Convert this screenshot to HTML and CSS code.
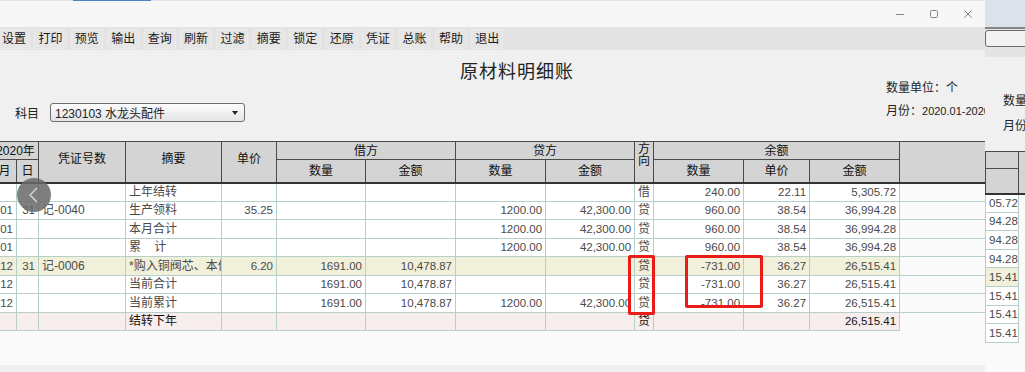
FILE: index.html
```html
<!DOCTYPE html>
<html lang="zh-CN">
<head>
    <meta charset="UTF-8">
    <title>原材料明细账</title>
    <link rel="stylesheet" href="styles.css">
</head>
<body>

    <div class="win">
        <!-- 标题栏 -->
        <div class="titlebar">
            <div class="tab-line"><span></span></div>
            <div class="controls">
                <svg viewBox="0 0 10 10"><path d="M1 5.5 H9"/></svg>
                <svg viewBox="0 0 10 10"><rect x="1.5" y="1.5" width="7" height="7" rx="1"/></svg>
                <svg viewBox="0 0 10 10"><path d="M1.5 1.5 L8.5 8.5 M8.5 1.5 L1.5 8.5"/></svg>
            </div>
        </div>

        <!-- 工具栏 -->
        <div class="toolbar">
            <span class="tool">设置</span>
            <span class="tool">打印</span>
            <span class="tool">预览</span>
            <span class="tool">输出</span>
            <span class="tool">查询</span>
            <span class="tool">刷新</span>
            <span class="tool">过滤</span>
            <span class="tool">摘要</span>
            <span class="tool">锁定</span>
            <span class="tool">还原</span>
            <span class="tool">凭证</span>
            <span class="tool">总账</span>
            <span class="tool">帮助</span>
            <span class="tool">退出</span>
        </div>

        <div class="head">
            <div class="subject">
                <span>科目</span>
                <div class="select"><span>1230103 水龙头配件</span><i class="arrow"></i></div>
            </div>
            <div class="title">原材料明细账</div>
            <div class="units">
                <div>数量单位：个</div>
                <div class="month">月份：<span class="digits">2020.01-2020.12</span></div>
            </div>
        </div>

        <div class="grid">
            <table class="ledger">
                <colgroup>
                    <col style="width:24px"><col style="width:22px"><col style="width:87px"><col style="width:96px">
                    <col style="width:55px"><col style="width:89px"><col style="width:90px"><col style="width:90px">
                    <col style="width:89px"><col style="width:19px"><col style="width:90px"><col style="width:66px">
                    <col style="width:90px"><col style="width:86px">
                </colgroup>
                <thead>
                    <tr class="r1">
                        <th colspan="2">2020年</th>
                        <th rowspan="2" class="rs">凭证号数</th>
                        <th rowspan="2" class="rs">摘要</th>
                        <th rowspan="2" class="rs">单价</th>
                        <th colspan="2">借方</th>
                        <th colspan="2">贷方</th>
                        <th rowspan="2" class="dir-head">方<br>向</th>
                        <th colspan="3">余额</th>
                        <th rowspan="2"></th>
                    </tr>
                    <tr class="r2">
                        <th>月</th><th>日</th>
                        <th>数量</th><th>金额</th>
                        <th>数量</th><th>金额</th>
                        <th>数量</th><th>单价</th><th>金额</th>
                    </tr>
                </thead>
                <tbody>
                    <tr class="top">
                        <td class="num"></td><td class="num"></td><td></td><td>上年结转</td><td class="num"></td>
                        <td class="num"></td><td class="num"></td><td class="num"></td><td class="num"></td>
                        <td class="c">借</td><td class="num">240.00</td><td class="num">22.11</td><td class="num">5,305.72</td><td class="blank"></td>
                    </tr>
                    <tr>
                        <td class="num">01</td><td class="num">31</td><td>记-0040</td><td>生产领料</td><td class="num">35.25</td>
                        <td class="num"></td><td class="num"></td><td class="num">1200.00</td><td class="num">42,300.00</td>
                        <td class="c">贷</td><td class="num">960.00</td><td class="num">38.54</td><td class="num">36,994.28</td><td class="blank"></td>
                    </tr>
                    <tr>
                        <td class="num">01</td><td class="num"></td><td></td><td>本月合计</td><td class="num"></td>
                        <td class="num"></td><td class="num"></td><td class="num">1200.00</td><td class="num">42,300.00</td>
                        <td class="c">贷</td><td class="num">960.00</td><td class="num">38.54</td><td class="num">36,994.28</td><td class="blank"></td>
                    </tr>
                    <tr>
                        <td class="num">01</td><td class="num"></td><td></td><td class="pre">累    计</td><td class="num"></td>
                        <td class="num"></td><td class="num"></td><td class="num">1200.00</td><td class="num">42,300.00</td>
                        <td class="c">贷</td><td class="num">960.00</td><td class="num">38.54</td><td class="num">36,994.28</td><td class="blank"></td>
                    </tr>
                    <tr class="row-new">
                        <td class="num">12</td><td class="num">31</td><td>记-0006</td><td>*购入铜阀芯、本体</td><td class="num">6.20</td>
                        <td class="num">1691.00</td><td class="num">10,478.87</td><td class="num"></td><td class="num"></td>
                        <td class="c">贷</td><td class="num">-731.00</td><td class="num">36.27</td><td class="num">26,515.41</td><td class="blank"></td>
                    </tr>
                    <tr>
                        <td class="num">12</td><td class="num"></td><td></td><td>当前合计</td><td class="num"></td>
                        <td class="num">1691.00</td><td class="num">10,478.87</td><td class="num"></td><td class="num"></td>
                        <td class="c">贷</td><td class="num">-731.00</td><td class="num">36.27</td><td class="num">26,515.41</td><td class="blank"></td>
                    </tr>
                    <tr>
                        <td class="num">12</td><td class="num"></td><td></td><td>当前累计</td><td class="num"></td>
                        <td class="num">1691.00</td><td class="num">10,478.87</td><td class="num">1200.00</td><td class="num">42,300.00</td>
                        <td class="c">贷</td><td class="num">-731.00</td><td class="num">36.27</td><td class="num">26,515.41</td><td class="blank"></td>
                    </tr>
                    <tr class="row-end">
                        <td class="num"></td><td class="num"></td><td></td><td>结转下年</td><td class="num"></td>
                        <td class="num"></td><td class="num"></td><td class="num"></td><td class="num"></td>
                        <td class="c">贷</td><td class="num"></td><td class="num"></td><td class="num">26,515.41</td><td class="blank"></td>
                    </tr>
                </tbody>
            </table>

            <!-- 浮在表格上的返回按钮和红框标记 -->
            <div class="nav-back">
                <svg viewBox="0 0 34 34"><path d="M20 10 L13 17 L20 24"/></svg>
            </div>
            <div class="mark mark-dir"></div>
            <div class="mark mark-qty"></div>
        </div>

        <div class="status"></div>
    </div>

    <!-- 后面的第二个窗口 -->
    <div class="side">
        <div class="side-top"></div>
        <div class="side-bar"><div class="side-box"></div></div>
        <div class="side-head">
            <div>数量单位：个</div>
            <div class="month">月份：2020.01-2020.12</div>
        </div>
        <div class="side-grid">
            <table class="side-table">
                <colgroup><col style="width:33px"><col style="width:47px"></colgroup>
                <thead>
                    <tr class="s1"><th></th><th rowspan="2"></th></tr>
                    <tr class="s2"><th></th></tr>
                </thead>
                <tbody>
                    <tr><td>05.72</td><td class="blank"></td></tr>
                    <tr><td>94.28</td><td class="blank"></td></tr>
                    <tr><td>94.28</td><td class="blank"></td></tr>
                    <tr><td>94.28</td><td class="blank"></td></tr>
                    <tr class="row-new"><td>15.41</td><td class="blank"></td></tr>
                    <tr><td>15.41</td><td class="blank"></td></tr>
                    <tr><td>15.41</td><td class="blank"></td></tr>
                    <tr><td>15.41</td><td class="blank"></td></tr>
                </tbody>
            </table>
        </div>
    </div>

</body>
</html>
```

FILE: styles.css
```css
body {
    margin: 0;
    width: 1025px;
    height: 372px;
    overflow: hidden;
    display: flex;
    font-family: "Liberation Sans", "Noto Sans CJK SC", sans-serif;
    font-size: 12px;
    color: #222;
    background-color: #fafafa;
}

.win {
    width: 985px;
    flex: none;
    display: flex;
    flex-direction: column;
    overflow: hidden;
    background-color: #f0f0f0;
}

/* 标题栏 */
.titlebar {
    height: 27px;
    flex: none;
    background-color: #f7f7f7;
}

.tab-line {
    height: 1px;
    padding-left: 73px;
    background-color: #e2e6eb;
}

.tab-line span {
    display: block;
    width: 78px;
    height: 1px;
    background-color: #4d7fc4;
}

.controls {
    height: 26px;
    display: flex;
    justify-content: flex-end;
    align-items: center;
    gap: 24px;
    padding-right: 12px;
}

.controls svg {
    width: 10px;
    height: 10px;
    fill: none;
    stroke: #858585;
    stroke-width: 1;
}

/* 工具栏 */
.toolbar {
    height: 23px;
    flex: none;
    display: flex;
    align-items: center;
    gap: 4.4px;
    padding-left: 0;
    background-color: #e3e3e3;
}

.tool {
    padding: 1px 3px;
    line-height: 16px;
    border: 1px solid #ebebeb;
    border-radius: 2px;
    background-color: #e6e6e6;
    color: #1a1a1a;
    white-space: nowrap;
}

.tool:first-child {
    margin-left: -2px;
}

.head {
    height: 91px;
    flex: none;
    display: grid;
    grid-template-columns: 460px 426px 1fr;
}

.subject {
    align-self: end;
    display: flex;
    align-items: center;
    gap: 11px;
    padding: 0 0 19px 15px;
}

.select {
    width: 195px;
    height: 19px;
    box-sizing: border-box;
    display: flex;
    align-items: center;
    justify-content: space-between;
    padding: 0 6px 0 4px;
    border: 1px solid #707070;
    border-radius: 3px;
    background: linear-gradient(#fdfdfd, #e4e4e4);
}

.arrow {
    width: 0;
    height: 0;
    border-left: 3.5px solid transparent;
    border-right: 3.5px solid transparent;
    border-top: 4px solid #222;
}

.title {
    padding-top: 11px;
    font-size: 18px;
    line-height: 22px;
    letter-spacing: 1px;
    color: #222;
}

.units {
    padding-top: 30px;
    line-height: 16px;
    white-space: nowrap;
}

.units .month {
    margin-top: 7px;
}

.units .digits {
    font-size: 11px;
}

/* 明细表格 */
.grid {
    position: relative;
    flex: 1;
    background-color: #fafafa;
}

.status {
    height: 7px;
    flex: none;
    background-color: #f0f0f0;
}

.ledger {
    margin-left: -8px;
    width: 993px;
    table-layout: fixed;
    border-collapse: collapse;
}

.ledger th {
    padding: 0;
    border: 1px solid #4a4a4a;
    background-color: #d4d4d4;
    font-weight: normal;
    line-height: 14px;
    color: #111;
    white-space: nowrap;
    overflow: hidden;
}

.ledger .r1 {
    height: 18px;
}

.ledger .r2 {
    height: 23px;
}

.ledger th.rs {
    padding-bottom: 5px;
}

.ledger th.dir-head {
    vertical-align: top;
    padding-top: 1px;
    line-height: 12px;
}

.ledger tbody tr {
    height: 18.5px;
}

.ledger td {
    padding: 0 3px;
    border: 1px solid #b6cfc8;
    background-color: #fff;
    line-height: 14px;
    color: #4a4a4a;
    white-space: nowrap;
    overflow: hidden;
}

.ledger .top td {
    border-top: 2px solid #333;
}

.ledger td.num {
    text-align: right;
    font-size: 11.5px;
}

.ledger td.c {
    padding: 0;
    text-align: center;
}

.ledger td.pre {
    white-space: pre;
}

.ledger td.blank {
    border-left: none;
    border-right: none;
    border-bottom: none;
    background-color: transparent;
}

.ledger .row-new td {
    background-color: #f1f0da;
}

.ledger .row-end td {
    background-color: #f8eded;
    color: #111;
}

.ledger .row-new td.blank,
.ledger .row-end td.blank {
    background-color: transparent;
}

.nav-back {
    position: absolute;
    left: 17px;
    top: 37px;
    width: 34px;
    height: 34px;
    border-radius: 50%;
    background-color: rgba(105, 105, 105, 0.85);
}

.nav-back svg {
    display: block;
    width: 34px;
    height: 34px;
    fill: none;
    stroke: #d6d6d6;
    stroke-width: 1.4;
}

.mark {
    position: absolute;
    top: 114px;
    box-sizing: border-box;
    border: 3px solid #ea1c17;
    border-radius: 2px;
}

.mark-dir {
    left: 628px;
    width: 27px;
    height: 60px;
}

.mark-qty {
    left: 685px;
    width: 78px;
    height: 53px;
}

/* 右边露出的窗口 */
.side {
    width: 40px;
    flex: none;
    display: flex;
    flex-direction: column;
    overflow: hidden;
    background-color: #fafafa;
}

.side-top {
    height: 27px;
    flex: none;
    background-color: #dce2ea;
}

.side-bar {
    height: 27px;
    flex: none;
    padding-top: 1px;
    border-top: 2px solid #858585;
    background-color: #e4e4e4;
}

.side-box {
    width: 60px;
    height: 17px;
    box-sizing: border-box;
    border: 1px solid #6a6a6a;
    border-radius: 3px;
    background-color: #f2f2f2;
}

.side-head {
    height: 58px;
    flex: none;
    padding: 36px 0 0 18px;
    line-height: 16px;
    white-space: nowrap;
    background-color: #f0f0f0;
}

.side-head .month {
    margin-top: 9px;
}

.side-grid {
    flex: 1;
}

.side-table {
    width: 80px;
    table-layout: fixed;
    border-collapse: collapse;
}

.side-table th {
    padding: 0;
    border: 1px solid #4a4a4a;
    background-color: #d4d4d4;
}

.side-table .s1 {
    height: 17px;
}

.side-table .s2 {
    height: 25px;
}

.side-table tbody tr {
    height: 18.6px;
}

.side-table td {
    padding: 0 3px;
    border: 1px solid #b6cfc8;
    background-color: #fff;
    line-height: 14px;
    font-size: 11.5px;
    color: #4a4a4a;
    text-align: right;
    white-space: nowrap;
    overflow: hidden;
}

.side-table tbody tr:first-child td {
    border-top: 2px solid #333;
}

.side-table .row-new td {
    background-color: #f1f0da;
}

.side-table td.blank {
    border: none;
    background-color: transparent;
}
```
